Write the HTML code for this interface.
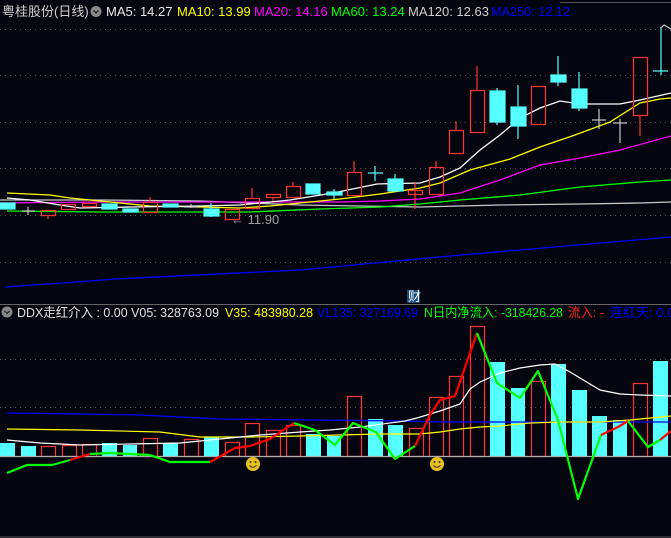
<!DOCTYPE html>
<html><head><meta charset="utf-8"><style>
html,body{margin:0;padding:0;background:#05050f;width:671px;height:538px;overflow:hidden}
svg{display:block}
text{font-family:"Liberation Sans","Noto Sans CJK SC",sans-serif;font-size:13px}
</style></head><body>
<svg width="671" height="538" viewBox="0 0 671 538" xmlns="http://www.w3.org/2000/svg">
<rect width="671" height="538" fill="#05050f"/>
<g stroke="#555" stroke-width="1" stroke-dasharray="1 4">
<line x1="0" y1="29.5" x2="671" y2="29.5"/><line x1="0" y1="75.5" x2="671" y2="75.5"/>
<line x1="0" y1="122.5" x2="671" y2="122.5"/><line x1="0" y1="168.5" x2="671" y2="168.5"/>
<line x1="0" y1="215.5" x2="671" y2="215.5"/><line x1="0" y1="262.5" x2="671" y2="262.5"/>
<line x1="0" y1="359.5" x2="671" y2="359.5"/><line x1="0" y1="407.5" x2="671" y2="407.5"/>
</g>
<line x1="560" y1="2.5" x2="671" y2="2.5" stroke="#555"/>
<line x1="0" y1="304.5" x2="671" y2="304.5" stroke="#666"/>
<line x1="0" y1="537" x2="671" y2="537" stroke="#555"/>
<g fill="none" stroke-width="1.3">
<polyline stroke="#0000ff" points="5,287 90,281 115,279 300,270 450,256 671,237"/>
<polyline stroke="#c8c8c8" points="0,200 100,200 200,201 300,205 420,207 500,205 580,204 640,203 671,202"/>
<polyline stroke="#00ff00" points="7,211 100,212 250,212 320,209 380,207 420,204 460,200 520,195 580,187 640,182 671,180"/>
<polyline stroke="#ff00ff" points="0,203 100,202 200,202 340,202 380,201 420,199 460,193 500,180 540,165 580,158 620,150 671,136"/>
<polyline stroke="#ffff00" points="7,193 50,195 70,198 100,201 150,206 200,207 240,208 270,206 300,203 340,199 380,194 420,188 440,183 470,170 510,159 540,147 575,135 610,122 640,103 660,99 671,98"/>
<polyline stroke="#ffffff" points="7,198 30,200 60,205 80,208 130,207 200,206 240,205 290,200 333,193 377,184 420,183 440,177 460,168 480,150 500,135 520,118 540,108 560,101 580,104 620,104 640,100 671,93"/>
</g>
<g stroke-width="1.2">
<g fill="#55ffff" stroke="#55ffff">
<rect x="0" y="203" width="15" height="6"/>
<rect x="102" y="204" width="15" height="5"/>
<rect x="123" y="209" width="15" height="3"/>
<rect x="163" y="204" width="15" height="3"/>
<line x1="211" y1="203" x2="211" y2="217"/><rect x="204" y="209" width="15" height="7"/>
<rect x="306" y="184" width="14" height="10"/>
<line x1="334" y1="189" x2="334" y2="199"/><rect x="327" y="192" width="15" height="3"/>
<line x1="375" y1="166" x2="375" y2="181"/><line x1="368" y1="173" x2="383" y2="173"/>
<line x1="395" y1="174" x2="395" y2="191"/><rect x="388" y="179" width="15" height="12"/>
<line x1="497" y1="88" x2="497" y2="125"/><rect x="490" y="91" width="15" height="31"/>
<line x1="518" y1="85" x2="518" y2="139"/><rect x="511" y="107" width="15" height="19"/>
<line x1="558" y1="56" x2="558" y2="86"/><rect x="551" y="75" width="15" height="7"/>
<line x1="579" y1="72" x2="579" y2="111"/><rect x="572" y="89" width="15" height="19"/>
<line x1="661" y1="27" x2="661" y2="75"/><line x1="653" y1="71" x2="668" y2="71"/>
</g>
<g fill="none" stroke="#ff3333">
<line x1="48" y1="215" x2="48" y2="219"/><rect x="41.5" y="210.5" width="14" height="5"/>
<rect x="61.5" y="204.5" width="14" height="5"/>
<rect x="82.5" y="203.5" width="14" height="3"/>
<line x1="150" y1="197" x2="150" y2="202"/><rect x="143.5" y="202.5" width="14" height="10"/>
<rect x="225.5" y="209.5" width="14" height="10"/>
<line x1="252" y1="188" x2="252" y2="198"/><rect x="245.5" y="198.5" width="14" height="10"/>
<line x1="273" y1="197" x2="273" y2="201"/><rect x="266.5" y="194.5" width="14" height="3"/>
<line x1="293" y1="182" x2="293" y2="186"/><rect x="286.5" y="186.5" width="14" height="11"/>
<line x1="354" y1="161" x2="354" y2="172"/><rect x="347.5" y="172.5" width="14" height="23"/>
<line x1="415" y1="182" x2="415" y2="209"/><rect x="408.5" y="190.5" width="14" height="4"/>
<line x1="436" y1="161" x2="436" y2="167"/><rect x="429.5" y="167.5" width="14" height="27"/>
<line x1="456" y1="121" x2="456" y2="130"/><rect x="449.5" y="130.5" width="14" height="23"/>
<line x1="477" y1="66" x2="477" y2="90"/><rect x="470.5" y="90.5" width="14" height="42"/>
<rect x="531.5" y="86.5" width="14" height="38"/>
<line x1="640" y1="115" x2="640" y2="136"/><rect x="633.5" y="57.5" width="14" height="58"/>
</g>
<g stroke="#c8c8c8">
<line x1="28" y1="207" x2="28" y2="215"/><line x1="22" y1="211" x2="35" y2="211"/>
<line x1="191" y1="204" x2="191" y2="208"/><line x1="184" y1="207" x2="198" y2="207"/>
<line x1="599" y1="109" x2="599" y2="129"/><line x1="592" y1="120" x2="606" y2="120"/>
<line x1="620" y1="119" x2="620" y2="143"/><line x1="613" y1="123" x2="627" y2="123"/>
</g>
<polyline points="661,28 664,25 671,29" fill="none" stroke="#c8c8c8"/>
</g>
<text x="231" y="224" fill="#a0a0a0" font-size="12">← 11.90</text>
<text x="2" y="16" fill="#d0d0d0">粤桂股份(日线)</text>
<circle cx="96" cy="11.5" r="5.5" fill="#888"/><path d="M93.5 10.5 L96 13 L98.5 10.5" stroke="#222" stroke-width="1.3" fill="none"/>
<text x="106" y="16" fill="#e8e8e8">MA5: 14.27</text>
<text x="177" y="16" fill="#ffff00">MA10: 13.99</text>
<text x="254" y="16" fill="#ff00ff">MA20: 14.16</text>
<text x="331" y="16" fill="#00ff00">MA60: 13.24</text>
<text x="408" y="16" fill="#d0d0d0">MA120: 12.63</text>
<text x="491" y="16" fill="#0000ff" textLength="79" lengthAdjust="spacingAndGlyphs">MA250: 12.12</text>
<rect x="407" y="290" width="13" height="13" fill="#1a4a7a"/>
<text x="408" y="301" fill="#ffffff" font-size="11">财</text>
<circle cx="7" cy="312" r="5.5" fill="#888"/><path d="M4.5 311 L7 313.5 L9.5 311" stroke="#222" stroke-width="1.3" fill="none"/>
<text x="17" y="317" fill="#e0e0e0" textLength="202" lengthAdjust="spacingAndGlyphs">DDX走红介入 : 0.00  V05: 328763.09</text>
<text x="225" y="317" fill="#ffff00" textLength="88" lengthAdjust="spacingAndGlyphs">V35: 483980.28</text>
<text x="317" y="317" fill="#0000ff" textLength="101" lengthAdjust="spacingAndGlyphs">VL135: 327169.69</text>
<text x="424" y="317" fill="#00ff00" textLength="139" lengthAdjust="spacingAndGlyphs">N日内净流入: -318426.28</text>
<text x="568" y="317" fill="#ff2020" textLength="36" lengthAdjust="spacingAndGlyphs">流入: -</text>
<text x="610" y="317" fill="#0000ff">连红天: 0.0</text>
<g fill="#55ffff">
<rect x="0" y="443" width="15" height="13"/><rect x="21" y="446" width="15" height="10"/>
<rect x="102" y="443" width="15" height="13"/><rect x="123" y="445" width="14" height="11"/>
<rect x="163" y="443" width="15" height="13"/><rect x="204" y="437" width="15" height="19"/>
<rect x="306" y="434" width="15" height="22"/><rect x="327" y="436" width="14" height="20"/>
<rect x="368" y="419" width="15" height="37"/><rect x="388" y="425" width="15" height="31"/>
<rect x="490" y="362" width="15" height="94"/><rect x="511" y="388" width="14" height="68"/>
<rect x="551" y="364" width="15" height="92"/><rect x="572" y="390" width="15" height="66"/>
<rect x="592" y="416" width="15" height="40"/><rect x="613" y="420" width="14" height="36"/>
<rect x="653" y="361" width="15" height="95"/>
</g>
<g fill="none" stroke="#ff3333" stroke-width="1.2">
<rect x="41.5" y="446.5" width="14" height="10"/><rect x="62.5" y="445.5" width="14" height="11"/>
<rect x="82.5" y="444.5" width="14" height="12"/><rect x="143.5" y="438.5" width="14" height="18"/>
<rect x="184.5" y="439.5" width="14" height="17"/><rect x="225.5" y="442.5" width="14" height="14"/>
<rect x="245.5" y="423.5" width="14" height="33"/><rect x="266.5" y="430.5" width="14" height="26"/>
<rect x="286.5" y="425.5" width="14" height="31"/><rect x="347.5" y="396.5" width="14" height="60"/>
<rect x="409.5" y="428.5" width="14" height="28"/><rect x="429.5" y="397.5" width="14" height="59"/>
<rect x="449.5" y="376.5" width="14" height="80"/><rect x="470.5" y="326.5" width="14" height="130"/>
<rect x="531.5" y="381.5" width="14" height="75"/><rect x="633.5" y="383.5" width="14" height="73"/>
</g>
<line x1="0" y1="456.5" x2="671" y2="456.5" stroke="#b0b0b0" stroke-width="1.2"/>
<g fill="none" stroke-width="1.2">
<polyline stroke="#0000ff" points="7,413 80,414 140,415 180,417 220,419 320,420 400,421 450,422 550,422 671,422"/>
<polyline stroke="#ffff00" points="7,429 80,430 160,432 200,437 250,437 300,436 340,435 380,434 420,434 440,432 460,429 480,427 500,426 530,423 560,422 600,422 630,420 671,416"/>
<polyline stroke="#ffffff" points="7,440 40,443 80,445 130,444 180,443 200,441 230,438 260,435 300,432 330,430 360,427 405,421 417,418 440,411 460,404 470,389 480,382 500,373 520,368 540,365 555,364 570,372 600,390 620,394 640,395 671,396"/>
</g>
<g fill="none" stroke-width="2.2" stroke-linejoin="round">
<polyline stroke="#00ff00" points="7,473 27,465 52,465 70,460"/>
<polyline stroke="#ff0000" points="70,460 90,454"/>
<polyline stroke="#00ff00" points="90,454 110,453 150,455 170,462 210,462"/>
<polyline stroke="#ff0000" points="210,462 235,448 250,446 270,439 294,423"/>
<polyline stroke="#00ff00" points="294,423 315,430 335,445 353,423 376,432 395,459 415,446"/>
<polyline stroke="#ff0000" points="415,446 430,415 440,400 455,396 477,333"/>
<polyline stroke="#00ff00" points="477,333 497,383 520,398 538,371 558,420 578,499 601,435"/>
<polyline stroke="#ff0000" points="601,435 618,427 628,421"/>
<polyline stroke="#00ff00" points="628,421 648,447 660,440"/>
<polyline stroke="#ff0000" points="660,440 671,431"/>
</g>
<g>
<circle cx="253" cy="464" r="7" fill="#e8c020"/><circle cx="250.5" cy="462" r="1" fill="#333"/><circle cx="255.5" cy="462" r="1" fill="#333"/><path d="M249.5 465.5 Q253 469 256.5 465.5" stroke="#333" fill="none"/>
<circle cx="437" cy="464" r="7" fill="#e8c020"/><circle cx="434.5" cy="462" r="1" fill="#333"/><circle cx="439.5" cy="462" r="1" fill="#333"/><path d="M433.5 465.5 Q437 469 440.5 465.5" stroke="#333" fill="none"/>
</g>
</svg>
</body></html>
